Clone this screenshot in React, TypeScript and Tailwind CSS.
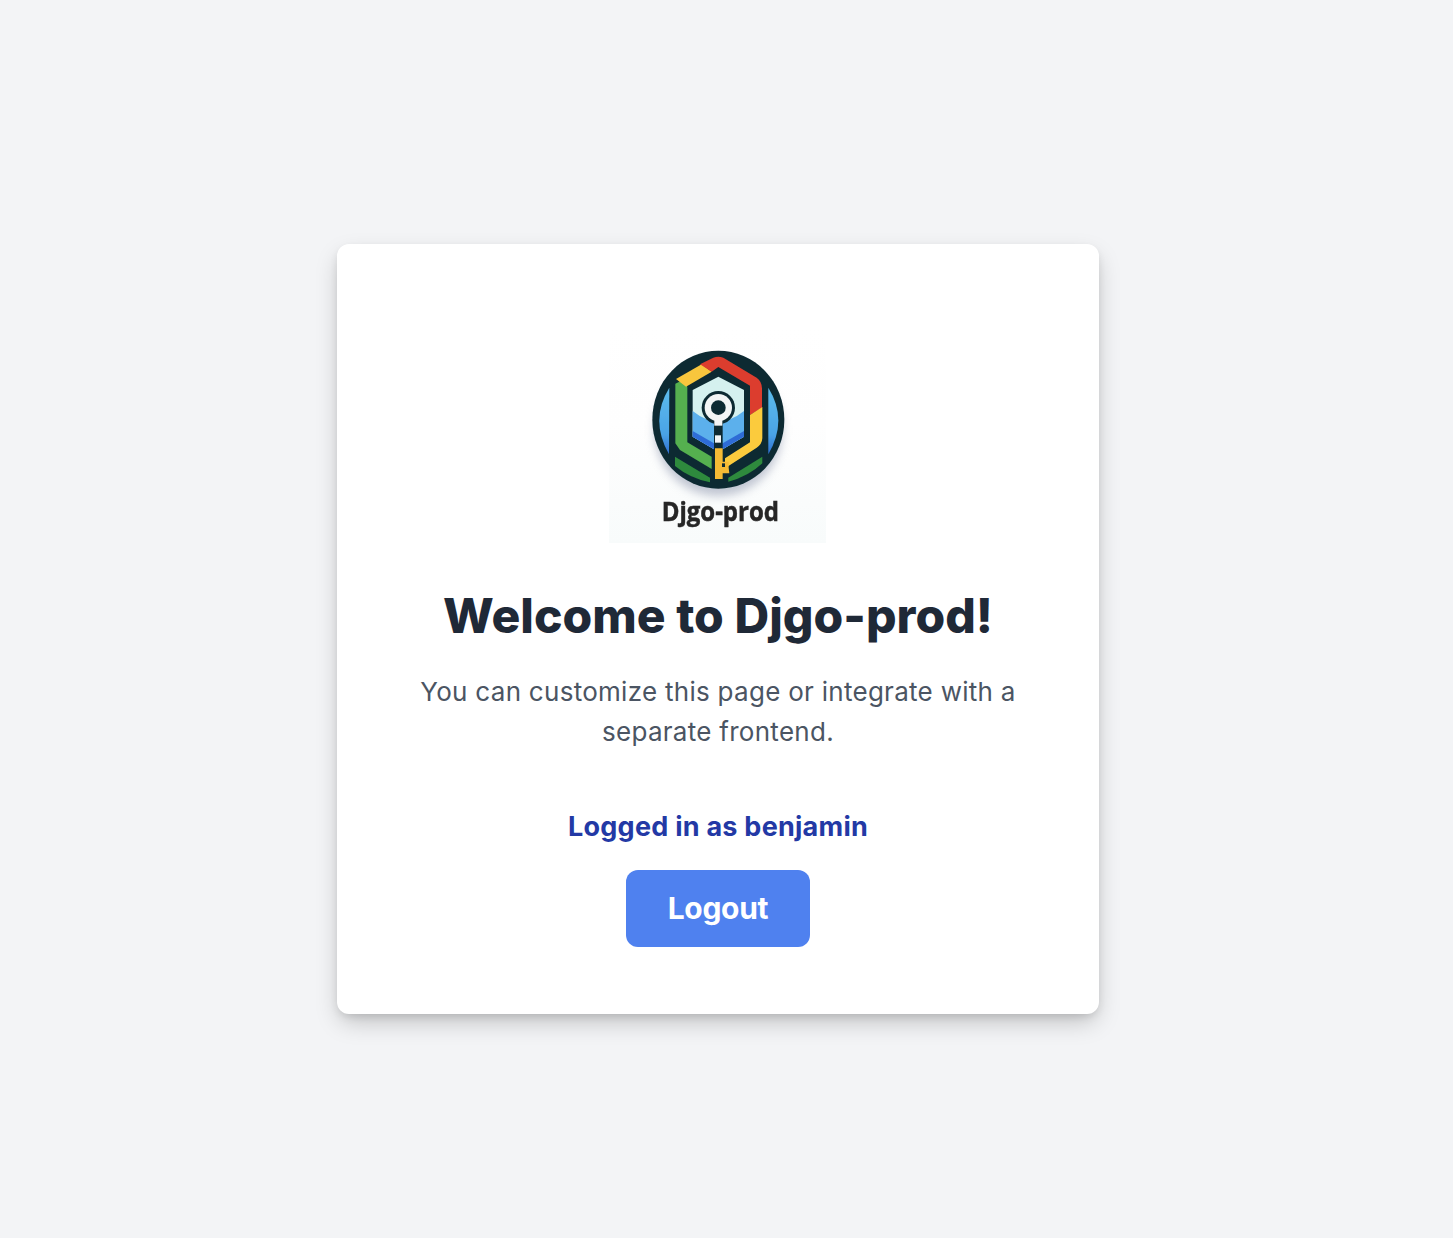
import React from 'react';

const Logo = () => (
    <svg viewBox="27 -27 651 651" className="block w-[217px] h-[217px] mr-px">
        <defs>
            <linearGradient id="logoBg" x1="0" y1="0" x2="0" y2="1">
                <stop offset="0" stopColor="#ffffff" />
                <stop offset="0.45" stopColor="#fefefe" />
                <stop offset="1" stopColor="#f8fbfb" />
            </linearGradient>
            <linearGradient id="side" x1="0" y1="0" x2="0" y2="1">
                <stop offset="0" stopColor="#5dbcec" />
                <stop offset="0.7" stopColor="#4aa3e6" />
                <stop offset="1" stopColor="#2f6fd3" />
            </linearGradient>
            <filter id="soft" x="-30%" y="-30%" width="160%" height="160%">
                <feGaussianBlur stdDeviation="14" />
            </filter>
            <filter id="edge" x="-5%" y="-5%" width="110%" height="110%">
                <feGaussianBlur stdDeviation="1.6" />
            </filter>
        </defs>
        <rect x="27" y="-27" width="651" height="651" fill="url(#logoBg)" />
        <ellipse cx="355" cy="285" rx="192" ry="198" fill="#9aa1b6" opacity="0.6" filter="url(#soft)" />
        <g filter="url(#edge)">
            <ellipse cx="355" cy="254" rx="198" ry="207" fill="#0c2a32" />
            <path d="M208 158 Q148 255 207 358 Z" fill="url(#side)" />
            <path d="M505 158 Q565 255 505 358 Z" fill="url(#side)" />
            <path d="M226 146 L250 134 L262 155 L262 322 L335 365 L335 402 L240 345 L226 325 Z" fill="#54b04f" />
            <path d="M228 132 L305 88 L335 110 L258 155 Z" fill="#f8c63d" />
            <path d="M300 88 L340 68 Q355 62 370 68 L470 128 Q485 138 486 160 L486 218 L450 240 L450 152 L355 96 L335 110 Z" fill="#dc3c2f" />
            <path d="M450 240 L487 216 L487 310 Q486 328 470 338 L375 400 L375 370 L450 322 Z" fill="#fbcb3e" />
            <path d="M225 365 L330 428 L330 442 Q270 430 225 393 Z" fill="#2f8a3c" />
            <path d="M487 365 L385 428 L385 440 Q445 425 487 385 Z" fill="#2f8a3c" />
            <path d="M355 125 L432 165 L432 305 L355 350 L278 305 L278 165 Z" fill="#d5f1ef" />
            <path d="M278 228 Q355 290 432 228 L432 305 L355 350 L278 305 Z" fill="#5bb0ec" />
            <path d="M278 288 L355 332 L432 288 L432 305 L355 350 L278 305 Z" fill="#2f6cd6" />
            <path d="M342 240 L368 240 L368 350 L342 350 Z" fill="#0c2a32" />
            <circle cx="355" cy="218" r="50" fill="#0c2a32" />
            <circle cx="355" cy="218" r="41" fill="#f3f5f5" />
            <circle cx="355" cy="218" r="22" fill="#0c2a32" />
            <rect x="343" y="255" width="24" height="17" fill="#f3f5f5" />
            <rect x="345" y="301" width="18" height="22" fill="#f3f5f5" />
            <path d="M345 340 L368 340 L368 380 L386 380 L386 398 L388 415 L368 415 L368 432 L345 432 Z" fill="#f5bb35" />
            <rect x="366" y="385" width="9" height="11" fill="#0c2a32" />
        </g>
        <text
            x="185"
            y="558"
            textLength="352"
            lengthAdjust="spacingAndGlyphs"
            fontFamily="'Open Sans', sans-serif"
            fontWeight="700"
            fontSize="80"
            fill="#262626"
            stroke="#262626"
            strokeWidth="1.5"
            filter="url(#edge)"
        >
            Djgo-prod
        </text>
    </svg>
);

const App = () => {
    return (
        <div className="h-screen bg-[#f3f4f6] flex items-center justify-center pt-5 pr-[17px] font-['Inter',sans-serif] [font-optical-sizing:none]">
            <div className="w-[762px] h-[770px] bg-white rounded-xl shadow-[0_10px_25px_-3px_rgba(0,0,0,0.22),0_4px_10px_-2px_rgba(0,0,0,0.12)] flex flex-col items-center pt-[82px] text-center">
                <Logo />
                <h1 className="mt-[37px] text-[48px] leading-[72px] font-extrabold tracking-[0.04px] text-[#1f2937]">
                    Welcome to Djgo-prod!
                </h1>
                <p className="mt-[20px] w-[640px] text-[26px] leading-10 tracking-[0.28px] text-[#4b5563]">
                    You can customize this page or integrate with a separate frontend.
                </p>
                <p className="mt-[55px] text-[27px] leading-10 tracking-[0.25px] font-bold text-[#2339a5]">
                    Logged in as benjamin
                </p>
                <button className="mt-[23px] w-[184px] h-[77px] bg-[#4f81ef] text-white text-[30px] font-bold tracking-[-0.3px] rounded-xl">
                    Logout
                </button>
            </div>
        </div>
    );
};

export default App;
